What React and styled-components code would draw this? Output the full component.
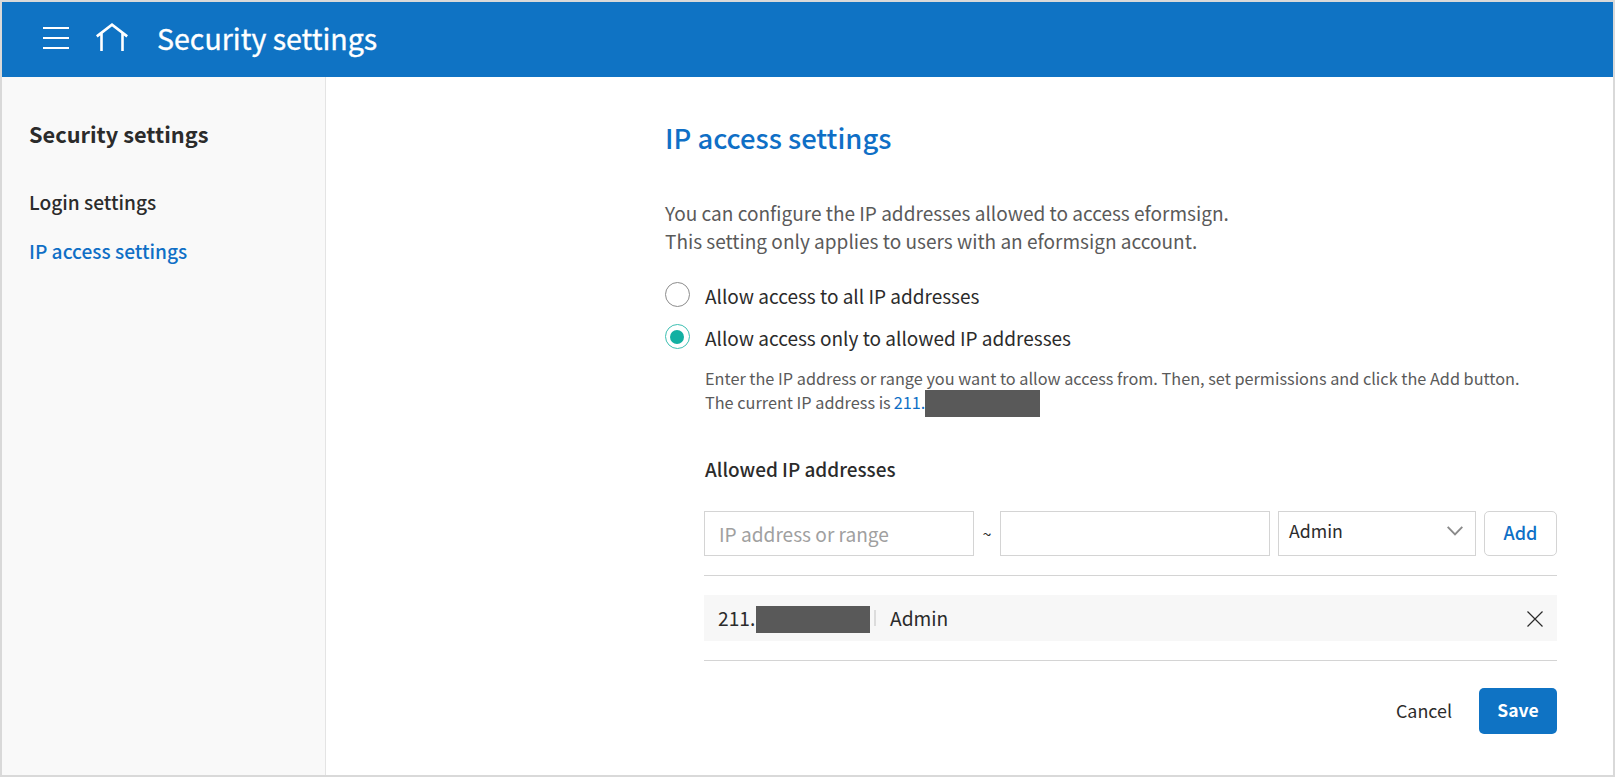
import React, { useState } from 'react';
import styled, { createGlobalStyle } from 'styled-components';

const GlobalStyle = createGlobalStyle`
  * { box-sizing: border-box; }
  body {
    margin: 0;
    color: #2b2b2b;
    font-family: "Noto Sans CJK KR", "Noto Sans", sans-serif;
  }
  h1, h2, h3, p { margin: 0; }
  button, input { font-family: inherit; }
`;

const Frame = styled.div`
  display: flex;
  flex-direction: column;
  width: 100%;
  height: 100vh;
  overflow: hidden;
  border: 2px solid #d9d9d9;
  background: #fff;
`;

const TopBar = styled.header`
  display: flex;
  align-items: flex-start;
  flex: 0 0 75px;
  padding-left: 41px;
  background: #0f73c4;
  color: #fff;
`;

const BarButton = styled.button`
  display: flex;
  margin: ${(p) => p.$margin};
  padding: 0;
  border: 0;
  background: none;
  color: inherit;
`;

const BarTitle = styled.h1`
  font-size: 28.55px;
  font-weight: 400;
  line-height: 72px;
  -webkit-text-stroke: 0.35px currentColor;
`;

const Body = styled.div`
  display: flex;
  flex: 1;
  min-height: 0;
`;

const Sidebar = styled.aside`
  flex: 0 0 324px;
  padding: 41px 0 0 27px;
  border-right: 1px solid #e4e4e4;
  background: #f9f9f9;
`;

const SidebarTitle = styled.h2`
  margin-bottom: 37px;
  font-size: 21.75px;
  font-weight: 700;
  line-height: 32px;
`;

const Menu = styled.nav`
  display: flex;
  flex-direction: column;
  gap: 19px;
`;

const MenuItem = styled.a`
  color: ${(p) => (p.$active ? '#0f6fc6' : '#2b2b2b')};
  font-size: 19.15px;
  font-weight: 500;
  line-height: 30px;
`;

const Main = styled.main`
  width: 1231px;
  padding: 40px 0 0 339px;
`;

const PageTitle = styled.h2`
  margin-bottom: 42px;
  color: #0f6fc6;
  font-size: 27.4px;
  font-weight: 500;
  line-height: 40px;
`;

const Description = styled.p`
  margin-bottom: 27px;
  color: #5a5a5a;
  font-size: 19.04px;
  line-height: 28px;
`;

const RadioRow = styled.label`
  display: flex;
  align-items: flex-start;
  gap: 15px;
  height: 25px;
  margin-bottom: 17px;
  font-size: 19px;
  line-height: 27px;
`;

const RadioMark = styled.span`
  display: flex;
  align-items: center;
  justify-content: center;
  width: 25px;
  height: 25px;
  border: 1px solid ${(p) => (p.$checked ? '#3dbfb2' : '#8c8c8c')};
  border-radius: 50%;
  background: #fff;

  &::after {
    content: "";
    width: 14px;
    height: 14px;
    margin-right: 1px;
    border-radius: 50%;
    background: ${(p) => (p.$checked ? '#12b0a2' : 'transparent')};
  }
`;

const Indented = styled.section`
  margin-left: 40px;
`;

const Help = styled.div`
  color: #5a5a5a;
  font-size: 16.28px;
  line-height: 24px;
  white-space: nowrap;
`;

const HelpLine = styled.p`
  display: flex;
  align-items: flex-start;
  height: 24px;
`;

const CurrentIp = styled.span`
  width: 31px;
  margin-left: 3px;
  color: #0f6fc6;
`;

const Redaction = styled.span`
  flex: none;
  width: ${(p) => p.$width}px;
  height: 27px;
  margin: ${(p) => p.$margin || 0};
  background: #595959;
`;

const SectionTitle = styled.h3`
  margin: 40px 0 27px;
  font-size: 18.95px;
  font-weight: 500;
  line-height: 30px;
`;

const AddForm = styled.div`
  display: flex;
  height: 45px;
  margin: 0 0 19px -1px;
`;

const IpInput = styled.input`
  width: 270px;
  height: 45px;
  padding: 1px 14px 0;
  border: 1px solid #d4d4d4;
  border-radius: 0;
  outline: none;
  color: #2b2b2b;
  font-size: 19.1px;

  &::placeholder { color: #a0a0a0; opacity: 1; }
`;

const Tilde = styled.span`
  width: 26px;
  font-size: 16px;
  line-height: 44px;
  text-align: center;
`;

const RoleSelect = styled.div`
  display: flex;
  justify-content: space-between;
  width: 198px;
  margin: 0 8px;
  padding: 0 12px 0 10px;
  border: 1px solid #d4d4d4;
  font-size: 17.75px;
  line-height: 37px;

  svg { margin-top: 14px; }
`;

const AddButton = styled.button`
  width: 73px;
  height: 45px;
  padding: 0 0 2px;
  border: 1px solid #d4d4d4;
  border-radius: 5px;
  background: #fff;
  color: #0f6fc6;
  font-size: 18px;
  font-weight: 500;
  line-height: 41px;
`;

const IpList = styled.ul`
  margin: 0 0 0 -1px;
  padding: 19px 0;
  border: solid #d4d4d4;
  border-width: 1px 0;
  list-style: none;
`;

const IpItem = styled.li`
  display: flex;
  align-items: center;
  height: 46px;
  padding: 0 14px;
  background: #f7f7f7;
  font-size: 19.2px;
  line-height: 46px;
`;

const IpPrefix = styled.span`
  width: 38px;
`;

const Divider = styled.span`
  width: 2px;
  height: 16px;
  margin: 0 14px 0 4px;
  background: #dcdcdc;
`;

const RemoveButton = styled.button`
  display: flex;
  margin: 1px 0 0 auto;
  padding: 0;
  border: 0;
  background: none;
`;

const Actions = styled.footer`
  display: flex;
  justify-content: flex-end;
  gap: 27px;
  margin-top: 27px;
`;

const CancelButton = styled.button`
  padding: 0 0 1px;
  border: 0;
  background: none;
  color: #2b2b2b;
  font-size: 17.9px;
  line-height: 45px;
`;

const SaveButton = styled.button`
  width: 78px;
  height: 46px;
  padding: 0 0 2px;
  border: 0;
  border-radius: 5px;
  background: #0f73c4;
  color: #fff;
  font-size: 17.5px;
  font-weight: 700;
  line-height: 44px;
`;

const MenuIcon = () => (
  <svg width="26" height="22" viewBox="0 0 26 22" fill="none" stroke="currentColor" strokeWidth="2">
    <path d="M0 1h26M0 11h26M0 21h26" />
  </svg>
);

const HomeIcon = () => (
  <svg width="32" height="28" viewBox="0 0 32 28" fill="none" stroke="currentColor" strokeWidth="2.6">
    <path d="M.8 13.4 16 1.7l15.2 11.7M5.5 10.5V28M26.5 10.5V28" />
  </svg>
);

const ChevronIcon = () => (
  <svg width="16" height="10" viewBox="0 0 16 10" fill="none" stroke="#8a8a8a" strokeWidth="1.9">
    <path d="m.7.9 7.3 7.6L15.3.9" />
  </svg>
);

const CloseIcon = () => (
  <svg width="16" height="16" viewBox="0 0 16 16" fill="none" stroke="#2b2b2b" strokeWidth="1.2">
    <path d="m.5.5 15 15M15.5.5l-15 15" />
  </svg>
);

const MODES = [
  { id: 'all', label: 'Allow access to all IP addresses' },
  { id: 'allowed', label: 'Allow access only to allowed IP addresses' },
];

export default function App() {
  const [mode, setMode] = useState('allowed');

  return (
    <Frame>
      <GlobalStyle />
      <TopBar>
        <BarButton $margin="25px 27px 0 0" aria-label="Menu"><MenuIcon /></BarButton>
        <BarButton $margin="21px 29px 0 0" aria-label="Home"><HomeIcon /></BarButton>
        <BarTitle>Security settings</BarTitle>
      </TopBar>
      <Body>
        <Sidebar>
          <SidebarTitle>Security settings</SidebarTitle>
          <Menu>
            <MenuItem>Login settings</MenuItem>
            <MenuItem $active>IP access settings</MenuItem>
          </Menu>
        </Sidebar>
        <Main>
          <PageTitle>IP access settings</PageTitle>
          <Description>
            You can configure the IP addresses allowed to access eformsign.<br />
            This setting only applies to users with an eformsign account.
          </Description>
          {MODES.map(({ id, label }) => (
            <RadioRow key={id} onClick={() => setMode(id)}>
              <RadioMark $checked={mode === id} />
              {label}
            </RadioRow>
          ))}
          <Indented>
            <Help>
              <HelpLine>
                Enter the IP address or range you want to allow access from. Then, set permissions and click the Add button.
              </HelpLine>
              <HelpLine>
                The current IP address is <CurrentIp>211.</CurrentIp>
                <Redaction $width={115} />
              </HelpLine>
            </Help>
            <SectionTitle>Allowed IP addresses</SectionTitle>
            <AddForm>
              <IpInput placeholder="IP address or range" />
              <Tilde>~</Tilde>
              <IpInput />
              <RoleSelect>Admin<ChevronIcon /></RoleSelect>
              <AddButton>Add</AddButton>
            </AddForm>
            <IpList>
              <IpItem>
                <IpPrefix>211.</IpPrefix>
                <Redaction $width={114} $margin="3px 0 0" />
                <Divider />
                Admin
                <RemoveButton aria-label="Remove"><CloseIcon /></RemoveButton>
              </IpItem>
            </IpList>
            <Actions>
              <CancelButton>Cancel</CancelButton>
              <SaveButton>Save</SaveButton>
            </Actions>
          </Indented>
        </Main>
      </Body>
    </Frame>
  );
}
